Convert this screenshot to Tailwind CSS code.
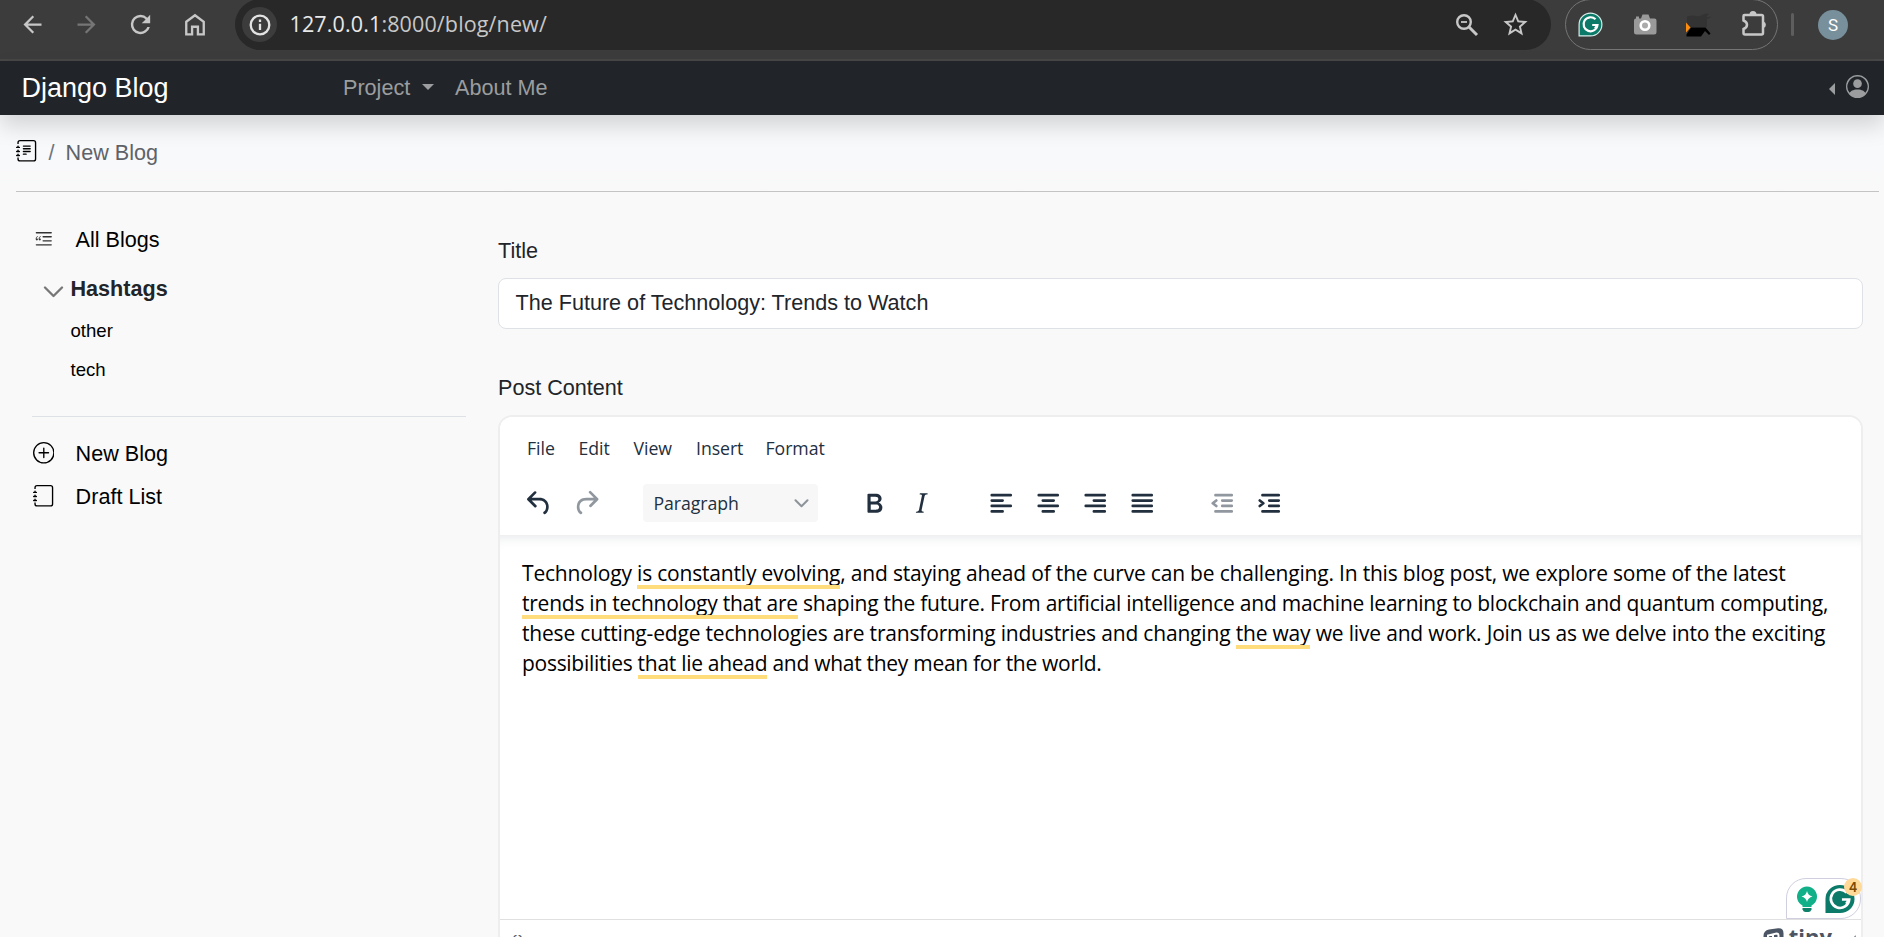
<!DOCTYPE html>
<html lang="en">
<head>
<meta charset="utf-8">
<title>New Blog</title>
<script src="https://cdn.jsdelivr.net/npm/@tailwindcss/browser@4"></script>
</head>
<body class="w-[1884px] h-[937px] overflow-hidden bg-[#f9f9f9] flex flex-col font-['Liberation_Sans',Arial,sans-serif] text-[21.6px] leading-[30px] text-[#212529]">

<!-- Browser toolbar -->
<div class="h-[61px] shrink-0 bg-[#3c3c3c] border-b-2 border-[#474747] flex items-start text-[#c7c7c7]">
  <div class="h-[49px] w-[235px] shrink-0 pl-[19.4px] flex items-center gap-[27px]">
    <svg class="size-[27px] shrink-0" viewBox="0 0 24 24" fill="currentColor"><path d="M20 11H7.83l5.59-5.59L12 4l-8 8 8 8 1.41-1.41L7.83 13H20v-2z"/></svg>
    <svg class="size-[27px] shrink-0 text-[#757575]" viewBox="0 0 24 24" fill="currentColor"><path d="M4 11h12.170l-5.590-5.590L12 4l8 8-8 8-1.410-1.410L16.170 13H4v-2z"/></svg>
    <svg class="size-[29px] -ml-[1px] shrink-0" viewBox="0 0 24 24" fill="currentColor"><path d="M17.65 6.35A7.96 7.96 0 0 0 12 4a8 8 0 1 0 7.73 10h-2.08A6 6 0 1 1 12 6c1.66 0 3.14.69 4.22 1.78L13 11h7V4l-2.35 2.35z"/></svg>
    <svg class="size-[28px] -ml-[1.500px] shrink-0" viewBox="0 0 24 24" fill="none" stroke="currentColor" stroke-width="2"><path d="M4.5 9.2 12 3.6l7.500 5.600V20h-5v-6.500h-5V20h-5z"/></svg>
  </div>
  <div class="-mt-[1px] h-[51px] w-[1316px] shrink-0 rounded-[26px] bg-[#282828] flex items-center pl-[7px]">
    <div class="size-[35px] rounded-full bg-[#3c3c3c] flex items-center justify-center">
      <svg class="size-[22px] text-[#e3e3e3]" viewBox="0 0 22 22" fill="none" stroke="currentColor" stroke-width="2.300"><circle cx="11" cy="11" r="9.300"/><path d="M11 9.700v6.300M11 5.500v2.500"/></svg>
    </div>
    <div class="ml-[12.500px] w-[1163.500px] whitespace-nowrap font-['Open_Sans','Noto_Sans',sans-serif] text-[21.500px] tracking-[0.130px] text-[#c7c7c7] -mt-[1px]"><span class="text-[#e8e8e8]">127.0.0.1</span>:8000/blog/new/</div>
    <svg class="w-[24px] h-[24px] shrink-0 ml-[2px]" viewBox="0 0 24 24" fill="none" stroke="currentColor" stroke-width="2.400"><circle cx="9" cy="9" r="6.800"/><path d="m14 14 8 8" stroke-width="3"/><path d="M6 9h6" stroke-width="1.800"/></svg>
    <svg class="size-[29px] shrink-0 ml-[21.500px]" viewBox="0 0 24 24" fill="currentColor"><path d="m22 9.240-7.190-.62L12 2 9.190 8.630 2 9.240l5.460 4.730L5.820 21 12 17.270 18.180 21l-1.630-7.030L22 9.240zM12 15.400l-3.760 2.270 1-4.280-3.320-2.880 4.380-.38L12 6.100l1.710 4.040 4.380.38-3.320 2.880 1 4.280L12 15.400z"/></svg>
  </div>
  <div class="-mt-[1px] ml-[14px] h-[51px] w-[213px] shrink-0 rounded-[26px] border border-[#757575] flex items-center pl-[12px]">
    <svg class="size-[25px] shrink-0" viewBox="0 0 25 25"><path d="M.500 24.500V12.500a12 12 0 1 1 12 12z" fill="#d7ece8"/><path d="M1.700 23.300V12.500a10.800 10.800 0 1 1 10.800 10.800z" fill="#0b7a69"/><path d="M17.500 7.300a7 7 0 1 0 2 5.700h-5.300M19.500 13l-2.500 3.500" fill="none" stroke="#fff" stroke-width="2.200"/></svg>
    <svg class="w-[24px] h-[21px] ml-[29.500px] shrink-0" viewBox="0 0 24 21"><path d="M3 2.500h3v2h2L9.500.5h6L17 4.500h4.500q2 0 2 2V18q0 2.500-2.500 2.500H3.500Q1 20.500 1 18V6.500q0-2 2-2z" fill="#9a9a9a"/><circle cx="12" cy="11.500" r="4.300" fill="#aaa" stroke="#fff" stroke-width="2.600"/></svg>
    <svg class="w-[26px] h-[26px] ml-[28px] shrink-0" viewBox="0 0 26 26"><path d="M2 4.500q6-1.500 9-.5t6-1q4-2.500 7-1-3 2-2 3 2 1 4-1l-1 2-3 1v8H5l-3-3z" fill="#333"/><path d="M1 10.500l4.500 5L1 20.500z" fill="#ff8c0a"/><path d="M6 15.500h14.500l5 6-1.500 1.500-4-4-4 5.500H1.500v-2z" fill="#000"/></svg>
    <svg class="w-[26px] h-[26px] ml-[30px] -mt-[3px] shrink-0" viewBox="0 0 26 26"><path d="M3.500 5H20.500q1.500 0 1.500 1.500v16.500q0 1.500-1.500 1.500H4q-1.500 0-1.500-1.500v-4q3.500-1.500 3.500-4.250T2.500 10.500V6q0-1 1-1z" fill="none" stroke="currentColor" stroke-width="2.500"/><path d="M8.500 4.500a3.500 3.500 0 0 1 7 0zM22.500 11.500a3.400 3.400 0 0 1 0 6.500z" fill="currentColor"/></svg>
  </div>
  <div class="ml-[13px] mt-[13px] h-[23px] w-[3px] rounded bg-[#5e5e5e]"></div>
  <div class="ml-[24px] mt-[10px] size-[30px] rounded-full bg-[#78909c] text-white text-[17px] font-['Roboto',sans-serif] flex items-center justify-center">S</div>
</div>

<!-- Site navigation -->
<nav class="relative z-10 h-[54px] shrink-0 bg-[#212529] shadow-[0_11px_22px_rgba(0,0,0,0.15)] flex items-center text-[#9b9d9f]">
  <a class="w-[343px] pl-[21.500px] text-[27px] text-white">Django Blog</a>
  <a class="flex items-center w-[112px]">Project<span class="ml-[11.500px] -mt-[2px] border-x-[6px] border-x-transparent border-t-[6px] border-t-[#9b9d9f]"></span></a>
  <a>About Me</a>
  <div class="ml-auto pr-[15px] flex items-center">
    <span class="mt-[2px] mr-[11px] border-y-[6px] border-y-transparent border-r-[6px] border-r-[#9b9d9f]"></span>
    <svg class="size-[23px] -mt-[4px]" viewBox="0 0 16 16" fill="currentColor"><path d="M11 6a3 3 0 1 1-6 0 3 3 0 0 1 6 0z"/><path fill-rule="evenodd" d="M0 8a8 8 0 1 1 16 0A8 8 0 0 1 0 8zm8-7a7 7 0 0 0-5.468 11.370C3.242 11.226 4.805 10 8 10s4.757 1.225 5.468 2.370A7 7 0 0 0 8 1z"/></svg>
  </div>
</nav>

<!-- Breadcrumb -->
<div class="h-[76px] shrink-0 flex items-start pt-[23px] pl-[16px] bg-linear-to-b from-[#f8f9fb] from-50% to-[#f9f9f9]">
  <svg class="size-[21.600px] mt-[2px] text-black" viewBox="0 0 16 16" fill="currentColor"><path d="M5 10.500a.5.5 0 0 1 .5-.5h2a.5.5 0 0 1 0 1h-2a.5.5 0 0 1-.5-.5zm0-2a.5.5 0 0 1 .5-.5h5a.5.5 0 0 1 0 1h-5a.5.5 0 0 1-.5-.5zm0-2a.5.5 0 0 1 .5-.5h5a.5.5 0 0 1 0 1h-5a.5.5 0 0 1-.5-.5zm0-2a.5.5 0 0 1 .5-.5h5a.5.5 0 0 1 0 1h-5a.5.5 0 0 1-.5-.5z"/><path d="M3 0h10a2 2 0 0 1 2 2v12a2 2 0 0 1-2 2H3a2 2 0 0 1-2-2v-1h1v1a1 1 0 0 0 1 1h10a1 1 0 0 0 1-1V2a1 1 0 0 0-1-1H3a1 1 0 0 0-1 1v1H1V2a2 2 0 0 1 2-2z"/><path d="M1 5v-.5a.5.5 0 0 1 1 0V5h.5a.5.5 0 0 1 0 1h-2a.5.5 0 0 1 0-1H1zm0 3v-.5a.5.5 0 0 1 1 0V8h.5a.5.5 0 0 1 0 1h-2a.5.5 0 0 1 0-1H1zm0 3v-.5a.5.5 0 0 1 1 0v.5h.5a.5.5 0 0 1 0 1h-2a.5.5 0 0 1 0-1H1z"/></svg>
  <span class="ml-[11px] text-[#6c757d]">/</span>
  <span class="ml-[11px] text-[#5f6368]">New Blog</span>
</div>
<hr class="shrink-0 ml-[16px] mr-[5px] border-0 h-px bg-[#c4c4c4]">

<main class="flex-1 flex min-h-0">
  <!-- Sidebar -->
  <aside class="w-[466px] shrink-0 pl-[32px] text-black">
    <a class="mt-[33px] flex items-center h-[30px] gap-[21px]">
      <svg class="size-[21.600px] ml-[1px] -mt-[2px] text-[#333]" viewBox="0 0 16 16" fill="currentColor"><path d="M2.500 3a.5.5 0 0 0 0 1h11a.5.5 0 0 0 0-1h-11zm5 3a.5.5 0 0 0 0 1h6a.5.5 0 0 0 0-1h-6zm0 3a.5.5 0 0 0 0 1h6a.5.5 0 0 0 0-1h-6zm-5 3a.5.5 0 0 0 0 1h11a.5.5 0 0 0 0-1h-11z"/><path id="quote" d="M3.290 6.627c.112-.078.26-.17.444-.275L3.524 6c-.122.074-.272.17-.452.287-.18.117-.35.26-.51.428a2.425 2.425 0 0 0-.398.562c-.11.207-.164.438-.164.692 0 .36.072.65.217.873.144.219.385.328.72.328.215 0 .383-.07.504-.211a.697.697 0 0 0 .188-.463c0-.23-.07-.404-.211-.521-.137-.121-.326-.182-.568-.182h-.282c.024-.203.065-.37.123-.498a1.380 1.380 0 0 1 .252-.37 1.940 1.940 0 0 1 .346-.298z"/><use href="#quote" x="2.170"/></svg>
      <span>All Blogs</span>
    </a>
    <div class="mt-[19px] flex items-center h-[30px] text-[#212529] font-bold">
      <svg class="ml-[11px] mr-[7px] mt-[5px] w-[21px] h-[12px]" viewBox="0 0 21 12" fill="none" stroke="#777" stroke-width="2.300" stroke-linecap="round" stroke-linejoin="round"><path d="m2 1.500 8.500 8.500L19 1.500"/></svg>
      <span class="-ml-[0.500px]">Hashtags</span>
    </div>
    <a class="block ml-[38.500px] mt-[12px] text-[18.600px]">other</a>
    <a class="block ml-[38.500px] mt-[9px] text-[18.600px]">tech</a>
    <hr class="mt-[31px] border-0 h-px bg-[#dee2e6]">
    <a class="mt-[22px] flex items-center h-[30px] gap-[21.500px]">
      <svg class="size-[21.600px] ml-[.5px] -mt-[2px]" viewBox="0 0 16 16" fill="none" stroke="currentColor" stroke-linecap="round"><circle cx="8" cy="8" r="7.500"/><path d="M8 4.500v7M4.500 8h7"/></svg>
      <span>New Blog</span>
    </a>
    <a class="mt-[13px] flex items-center h-[30px] gap-[21.500px]">
      <svg class="size-[21.600px] ml-[.5px] -mt-[2px]" viewBox="0 0 16 16" fill="currentColor"><path d="M3 0h10a2 2 0 0 1 2 2v12a2 2 0 0 1-2 2H3a2 2 0 0 1-2-2v-1h1v1a1 1 0 0 0 1 1h10a1 1 0 0 0 1-1V2a1 1 0 0 0-1-1H3a1 1 0 0 0-1 1v1H1V2a2 2 0 0 1 2-2z"/><path d="M1 5v-.5a.5.5 0 0 1 1 0V5h.5a.5.5 0 0 1 0 1h-2a.5.5 0 0 1 0-1H1zm0 3v-.5a.5.5 0 0 1 1 0V8h.5a.5.5 0 0 1 0 1h-2a.5.5 0 0 1 0-1H1zm0 3v-.5a.5.5 0 0 1 1 0v.5h.5a.5.5 0 0 1 0 1h-2a.5.5 0 0 1 0-1H1z"/></svg>
      <span>Draft List</span>
    </a>
  </aside>

  <!-- Form -->
  <section class="ml-[32px] w-[1365px] shrink-0 flex flex-col">
    <label class="mt-[44px]">Title</label>
    <div class="mt-[12px] h-[51px] shrink-0 rounded-[8px] border border-[#dee2e6] bg-white pl-[16.500px] flex items-center"><span class="-mt-[1px]">The Future of Technology: Trends to Watch</span></div>
    <label class="mt-[44px]">Post Content</label>

    <div class="relative mt-[12px] h-[560px] shrink-0 rounded-[14px] border-2 border-[#eee] bg-white font-['Open_Sans','Noto_Sans',sans-serif] flex flex-col">
      <div class="relative z-10 h-[118px] shrink-0 rounded-t-[12px] bg-white text-[#222f3e] text-[17.7px] tracking-[-0.060px]">
        <div class="h-[62px] pl-[27px] flex items-center">
          <span class="w-[51.500px]">File</span><span class="w-[55px]">Edit</span><span class="w-[62.500px]">View</span><span class="w-[69.500px]">Insert</span><span>Format</span>
        </div>
        <div class="h-[48px] pl-[22.500px] flex items-center">
          <svg class="size-[32.500px] mr-[15px]" viewBox="0 0 24 24" fill="currentColor"><path d="M6.400 8H12c3.700 0 6.200 2 6.800 5.100.6 2.700-.4 5.600-2.300 6.800a1 1 0 0 1-1-1.800c1.100-.6 1.800-2.700 1.400-4.600-.5-2.100-2.100-3.500-4.900-3.500H6.400l3.300 3.300a1 1 0 1 1-1.400 1.400l-5-5a1 1 0 0 1 0-1.400l5-5a1 1 0 0 1 1.400 1.400L6.400 8Z"/></svg>
          <svg class="size-[32.500px] text-[#222f3e]/50" viewBox="0 0 24 24" fill="currentColor"><path d="M17.600 10H12c-2.800 0-4.400 1.400-4.900 3.500-.4 2 .3 4 1.400 4.600a1 1 0 1 1-1 1.800c-2-1.200-2.900-4.100-2.300-6.800.6-3 3-5.100 6.800-5.100h5.600l-3.300-3.300a1 1 0 1 1 1.400-1.400l5 5a1 1 0 0 1 0 1.400l-5 5a1 1 0 0 1-1.400-1.400l3.300-3.300Z"/></svg>
          <div class="ml-[40px] w-[175px] h-[38px] rounded-[4px] bg-[#f7f7f7] flex items-center justify-between pl-[11px] pr-[9px]"><span>Paragraph</span>
            <svg class="w-[15px] h-[9px] text-[#222f3e]/50" viewBox="0 0 15 9" fill="none" stroke="currentColor" stroke-width="2" stroke-linecap="round" stroke-linejoin="round"><path d="m1.500 1.200 6 6 6-6"/></svg>
          </div>
          <svg class="size-[32.500px] ml-[40px] mr-[14.500px]" viewBox="0 0 24 24" fill="currentColor"><path d="M7.800 19c-.3 0-.5 0-.6-.2l-.2-.5V5.700c0-.2 0-.4.2-.5l.6-.2h5c1.500 0 2.700.3 3.500 1 .7.6 1.100 1.400 1.100 2.500a3 3 0 0 1-.6 1.900c-.4.6-1 1-1.600 1.200.4.1.9.3 1.300.6s.8.7 1 1.200c.4.4.5 1 .5 1.600 0 1.300-.4 2.300-1.300 3-.8.7-2.100 1-3.800 1H7.800Zm5-8.300c.6 0 1.200-.1 1.600-.5.4-.3.6-.7.6-1.300 0-1.100-.8-1.700-2.300-1.700H9.300v3.500h3.400Zm.5 6c.7 0 1.300-.1 1.700-.4.4-.4.6-.9.6-1.500s-.2-1-.7-1.400c-.4-.3-1-.4-2-.4H9.400v3.800h4Z"/></svg>
          <svg class="size-[32.500px]" viewBox="0 0 24 24" fill="currentColor"><path d="m16.700 4.700-.1.900h-.3c-.6 0-1 0-1.400.3-.3.3-.4.6-.5 1.100l-2.100 9.800v.6c0 .5.4.8 1.400.8h.2l-.2.8H8l.2-.8h.2c1.100 0 1.800-.5 2-1.500l2-9.800.1-.5c0-.6-.4-.8-1.400-.8h-.3l.2-.9h5.800Z"/></svg>
          <div class="ml-[47.500px] flex gap-[14.500px]">
            <svg class="size-[32.500px]" viewBox="0 0 24 24" stroke="currentColor" stroke-width="2" stroke-linecap="round"><path d="M5 6h14M5 10h8M5 14h14M5 18h8"/></svg>
            <svg class="size-[32.500px]" viewBox="0 0 24 24" stroke="currentColor" stroke-width="2" stroke-linecap="round"><path d="M5 6h14M8 10h8M5 14h14M8 18h8"/></svg>
            <svg class="size-[32.500px]" viewBox="0 0 24 24" stroke="currentColor" stroke-width="2" stroke-linecap="round"><path d="M5 6h14M11 10h8M5 14h14M11 18h8"/></svg>
            <svg class="size-[32.500px]" viewBox="0 0 24 24" stroke="currentColor" stroke-width="2" stroke-linecap="round"><path d="M5 6h14M5 10h14M5 14h14M5 18h14"/></svg>
          </div>
          <div class="ml-[48px] flex gap-[14.500px]">
            <svg class="size-[32.500px] text-[#222f3e]/50" viewBox="0 0 24 24" fill="none" stroke="currentColor" stroke-width="2" stroke-linecap="round" stroke-linejoin="round"><path d="M7 6h12M12 10h7M12 14h7M7 18h12M7.600 10 5 12l2.600 2"/></svg>
            <svg class="size-[32.500px]" viewBox="0 0 24 24" fill="none" stroke="currentColor" stroke-width="2" stroke-linecap="round" stroke-linejoin="round"><path d="M7 6h12M12 10h7M12 14h7M7 18h12M5 10l2.600 2L5 14"/></svg>
          </div>
        </div>
      </div>

      <div class="h-[385px] shrink-0 pt-[23px] pl-[22px] text-black text-[21px] whitespace-nowrap border-b border-[#e0e0e0] shadow-[inset_0_12px_12px_-10px_rgba(34,47,62,0.12)]">
        <p class="tracking-[-0.190px]">Technology <span class="relative">is constantly evolving<i class="absolute inset-x-0 bottom-[-2px] h-[4px] bg-[#ffdc7c]"></i></span>, and staying ahead of the curve can be challenging. In this blog post, we explore some of the latest</p>
        <p class="tracking-[-0.240px]"><span class="relative">trends in technology that are<i class="absolute inset-x-0 bottom-[-2px] h-[4px] bg-[#ffdc7c]"></i></span> shaping the future. From artificial intelligence and machine learning to blockchain and quantum computing,</p>
        <p class="tracking-[-0.180px]">these cutting-edge technologies are transforming industries and changing <span class="relative">the way<i class="absolute inset-x-0 bottom-[-2px] h-[4px] bg-[#ffdc7c]"></i></span> we live and work. Join us as we delve into the exciting</p>
        <p class="tracking-[-0.285px]">possibilities <span class="relative">that lie ahead<i class="absolute inset-x-0 bottom-[-2px] h-[4px] bg-[#ffdc7c]"></i></span> and what they mean for the world.</p>
      </div>

      <div class="flex-1 flex items-start justify-between pl-[11px] pr-[5px] text-[#4b5563]">
        <span class="mt-[11px] text-[16px] leading-[20px] tracking-[1px]">{}</span>
        <div class="flex items-start">
          <svg class="mt-[8px] w-[21px] h-[21px]" viewBox="0 0 21 21"><path d="M6 1.500 15 .2q5.500-.5 5.500 5v7q0 4-4 5L5 19q-4.500 0-4.500-4V8q0-5.500 5.500-6.500z" fill="#4b5563"/><path d="M5 9V7.500L13.500 5.500q2 0 2 2v7M10 7v8" fill="none" stroke="#fff" stroke-width="2"/></svg>
          <span class="mt-[1px] ml-[5px] text-[22px] leading-[30px] font-bold">tiny</span>
          <svg class="ml-[18px] mt-[15px] size-[6px]" viewBox="0 0 6 6" stroke="#8a929c" stroke-width="1.800"><path d="m1 6 5-5"/></svg>
        </div>
      </div>

      <!-- Writing assistant badge -->
      <div class="absolute z-20 left-[1286px] top-[461px] w-[75px] h-[41px] rounded-tl-[20px] rounded-r-[20px] border border-[#cfcfe0] bg-white">
        <svg class="absolute left-[9px] top-[7px] w-[22px] h-[28px]" viewBox="0 0 22 28"><path d="M6.500 19.500a10 10 0 1 1 9 0v1.500h-9z" fill="#11b088"/><path d="M11 5q1 4.500 5.500 5.500-4.500 1-5.500 5.500-1-4.500-5.500-5.500Q10 9.500 11 5z" fill="#fff"/><path d="M6.500 22h9v1.500q-1 2.500-3 2.500h-3q-2 0-3-2.500z" fill="#0c8069"/></svg>
        <svg class="absolute left-[38px] top-[5px] size-[30px]" viewBox="0 0 31 31"><path d="M.500 30V15.500A15 14.500 0 1 1 15.500 30z" fill="#0b7a69"/><path d="M22.500 8.800a9.500 9.500 0 1 0 2.500 7.200h-7.500M25 16l-3 4.500" fill="none" stroke="#fff" stroke-width="2.800"/></svg>
        <span class="absolute left-[57px] -top-[1px] size-[18px] rounded-full bg-[#ffd998] text-[13px] leading-[18px] text-center font-['Inter',sans-serif] font-semibold text-[#7a4a00]">4</span>
      </div>
    </div>
  </section>
</main>
</body>
</html>
